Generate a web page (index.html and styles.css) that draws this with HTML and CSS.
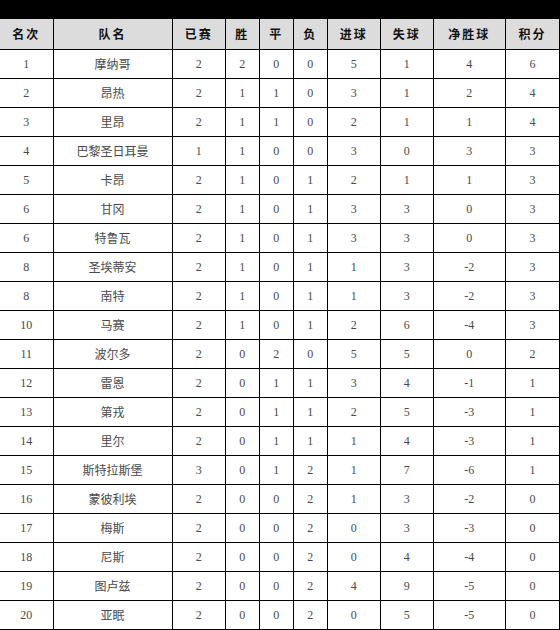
FILE: index.html
```html
<!DOCTYPE html>
<html lang="zh">
<head>
<meta charset="utf-8">
<link rel="stylesheet" href="styles.css">
</head>
<body>
<div class="topbar"></div>
<table class="standings">
<colgroup>
<col class="c-rank"><col class="c-team"><col class="c-n"><col class="c-s"><col class="c-s"><col class="c-s"><col class="c-n"><col class="c-n"><col class="c-gd"><col class="c-pts">
</colgroup>
<thead>
<tr><th>名次</th><th>队名</th><th>已赛</th><th>胜</th><th>平</th><th>负</th><th>进球</th><th>失球</th><th>净胜球</th><th>积分</th></tr>
</thead>
<tbody>
<tr><td>1</td><td>摩纳哥</td><td>2</td><td>2</td><td>0</td><td>0</td><td>5</td><td>1</td><td>4</td><td>6</td></tr>
<tr><td>2</td><td>昂热</td><td>2</td><td>1</td><td>1</td><td>0</td><td>3</td><td>1</td><td>2</td><td>4</td></tr>
<tr><td>3</td><td>里昂</td><td>2</td><td>1</td><td>1</td><td>0</td><td>2</td><td>1</td><td>1</td><td>4</td></tr>
<tr><td>4</td><td>巴黎圣日耳曼</td><td>1</td><td>1</td><td>0</td><td>0</td><td>3</td><td>0</td><td>3</td><td>3</td></tr>
<tr><td>5</td><td>卡昂</td><td>2</td><td>1</td><td>0</td><td>1</td><td>2</td><td>1</td><td>1</td><td>3</td></tr>
<tr><td>6</td><td>甘冈</td><td>2</td><td>1</td><td>0</td><td>1</td><td>3</td><td>3</td><td>0</td><td>3</td></tr>
<tr><td>6</td><td>特鲁瓦</td><td>2</td><td>1</td><td>0</td><td>1</td><td>3</td><td>3</td><td>0</td><td>3</td></tr>
<tr><td>8</td><td>圣埃蒂安</td><td>2</td><td>1</td><td>0</td><td>1</td><td>1</td><td>3</td><td>-2</td><td>3</td></tr>
<tr><td>8</td><td>南特</td><td>2</td><td>1</td><td>0</td><td>1</td><td>1</td><td>3</td><td>-2</td><td>3</td></tr>
<tr><td>10</td><td>马赛</td><td>2</td><td>1</td><td>0</td><td>1</td><td>2</td><td>6</td><td>-4</td><td>3</td></tr>
<tr><td>11</td><td>波尔多</td><td>2</td><td>0</td><td>2</td><td>0</td><td>5</td><td>5</td><td>0</td><td>2</td></tr>
<tr><td>12</td><td>雷恩</td><td>2</td><td>0</td><td>1</td><td>1</td><td>3</td><td>4</td><td>-1</td><td>1</td></tr>
<tr><td>13</td><td>第戎</td><td>2</td><td>0</td><td>1</td><td>1</td><td>2</td><td>5</td><td>-3</td><td>1</td></tr>
<tr><td>14</td><td>里尔</td><td>2</td><td>0</td><td>1</td><td>1</td><td>1</td><td>4</td><td>-3</td><td>1</td></tr>
<tr><td>15</td><td>斯特拉斯堡</td><td>3</td><td>0</td><td>1</td><td>2</td><td>1</td><td>7</td><td>-6</td><td>1</td></tr>
<tr><td>16</td><td>蒙彼利埃</td><td>2</td><td>0</td><td>0</td><td>2</td><td>1</td><td>3</td><td>-2</td><td>0</td></tr>
<tr><td>17</td><td>梅斯</td><td>2</td><td>0</td><td>0</td><td>2</td><td>0</td><td>3</td><td>-3</td><td>0</td></tr>
<tr><td>18</td><td>尼斯</td><td>2</td><td>0</td><td>0</td><td>2</td><td>0</td><td>4</td><td>-4</td><td>0</td></tr>
<tr><td>19</td><td>图卢兹</td><td>2</td><td>0</td><td>0</td><td>2</td><td>4</td><td>9</td><td>-5</td><td>0</td></tr>
<tr><td>20</td><td>亚眠</td><td>2</td><td>0</td><td>0</td><td>2</td><td>0</td><td>5</td><td>-5</td><td>0</td></tr>
</tbody>
</table>
</body>
</html>
```
FILE: styles.css
```css
html, body {
  margin: 0;
  padding: 0;
  background: #ffffff;
}
body {
  font-family: "Liberation Serif", "Noto Sans CJK SC", serif;
  width: 560px;
}
.topbar {
  height: 19px;
  background: #000000;
}
.standings {
  width: 560px;
  table-layout: fixed;
  border-collapse: collapse;
  border-spacing: 0;
}
.c-rank { width: 53px; }
.c-team { width: 119px; }
.c-n { width: 53px; }
.c-s { width: 34px; }
.c-gd { width: 72px; }
.c-pts { width: 54px; }
.standings th,
.standings td {
  border: 1px solid #000000;
  height: 28px;
  padding: 0;
  text-align: center;
  vertical-align: middle;
}
.standings th:first-child,
.standings td:first-child {
  border-left: none;
}
.standings th {
  background: #dcdcdc;
  color: #111111;
  font-size: 12px;
  font-weight: bold;
  border-top: none;
  letter-spacing: 2px;
  height: 30px;
}
.standings td {
  color: #4a4a4a;
  font-size: 12px;
}
```
